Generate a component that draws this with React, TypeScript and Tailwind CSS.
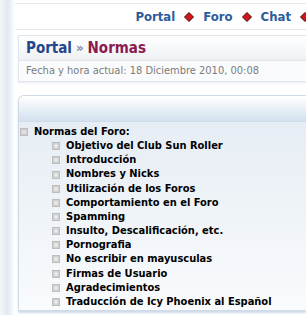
import React from "react";

const Diamond = () => (
  <svg width="10" height="10" viewBox="0 0 10 10" className="inline-block">
    <polygon points="5,0.5 9.5,5 5,9.5 0.5,5" fill="#d3141c" stroke="#3a0a0a" strokeWidth="1" />
  </svg>
);

const Box = ({ plus }: { plus?: boolean }) => (
  <svg width="8" height="8" viewBox="0 0 8 8" className="shrink-0">
    <rect x="0.5" y="0.5" width="7" height="7" fill="#d2d2d2" stroke="#bdbdbd" />
    <rect x="2" y="3.5" width="4" height="1" fill="#f4f4f4" />
    {plus && <rect x="3.5" y="2" width="1" height="4" fill="#f4f4f4" />}
  </svg>
);

const items = [
  "Objetivo del Club Sun Roller",
  "Introducción",
  "Nombres y Nicks",
  "Utilización de los Foros",
  "Comportamiento en el Foro",
  "Spamming",
  "Insulto, Descalificación, etc.",
  "Pornografia",
  "No escribir en mayusculas",
  "Firmas de Usuario",
  "Agradecimientos",
  "Traducción de Icy Phoenix al Español",
];

export default function App() {
  return (
    <div
      className="w-[306px] h-[315px] overflow-hidden bg-white flex"
      style={{ fontFamily: "'DejaVu Sans Condensed', 'DejaVu Sans', sans-serif" }}
    >
      <div className="w-[15px] shrink-0 bg-gradient-to-r from-[#f4f7fa] via-[#e1e8ee] to-white" />
      <div className="flex-1 min-w-0 flex flex-col">
        <div className="mt-[3px] border-t border-b border-[#e3e9ef] h-[27px] flex items-center justify-end gap-[9px] pr-0 text-[13px] font-bold text-[#2b5c9b] whitespace-nowrap">
          <span>Portal</span>
          <Diamond />
          <span>Foro</span>
          <Diamond />
          <span>Chat</span>
          <span className="-mr-[4px]"><Diamond /></span>
        </div>
        <div className="ml-[3px] mt-[5px] border border-r-0 border-[#dfe6ed] shadow-[0_1px_2px_rgba(0,0,0,0.08)]">
          <div className="h-[25px] px-[7px] flex items-center bg-gradient-to-b from-white to-[#eef1f4] border-b border-[#dfe6ed] text-[15px] font-bold whitespace-nowrap">
            <span className="text-[#24478c]">Portal</span>
            <span className="text-[#7a8aa8] mx-[4px] text-[13px]">»</span>
            <span className="text-[#8b1a4f]">Normas</span>
          </div>
          <div className="h-[20px] px-[7px] flex items-center bg-[#fafbfc] text-[11px] text-[#7b7b7b] whitespace-nowrap">
            Fecha y hora actual: 18 Diciembre 2010, 00:08
          </div>
        </div>
        <div className="ml-[3px] mt-[13px] rounded-tl-[6px] border border-r-0 border-[#cfdbe6] shadow-[0_2px_2px_rgba(160,185,210,0.5)]">
          <div className="h-[26px] rounded-tl-[6px] bg-gradient-to-b from-white to-[#d3e1ee] border-b border-[#d0dce8]" />
          <div className="bg-gradient-to-b from-[#e6edf4] to-[#f9fbfd] pt-[3px] pb-[1px] text-[11px] font-bold text-black leading-[14.15px] whitespace-nowrap">
            <div className="flex items-center gap-[6px] pl-[1px]">
              <Box />
              <span>Normas del Foro:</span>
            </div>
            {items.map((t) => (
              <div key={t} className="flex items-center gap-[6px] pl-[33px]">
                <Box plus />
                <span>{t}</span>
              </div>
            ))}
          </div>
        </div>
      </div>
    </div>
  );
}
